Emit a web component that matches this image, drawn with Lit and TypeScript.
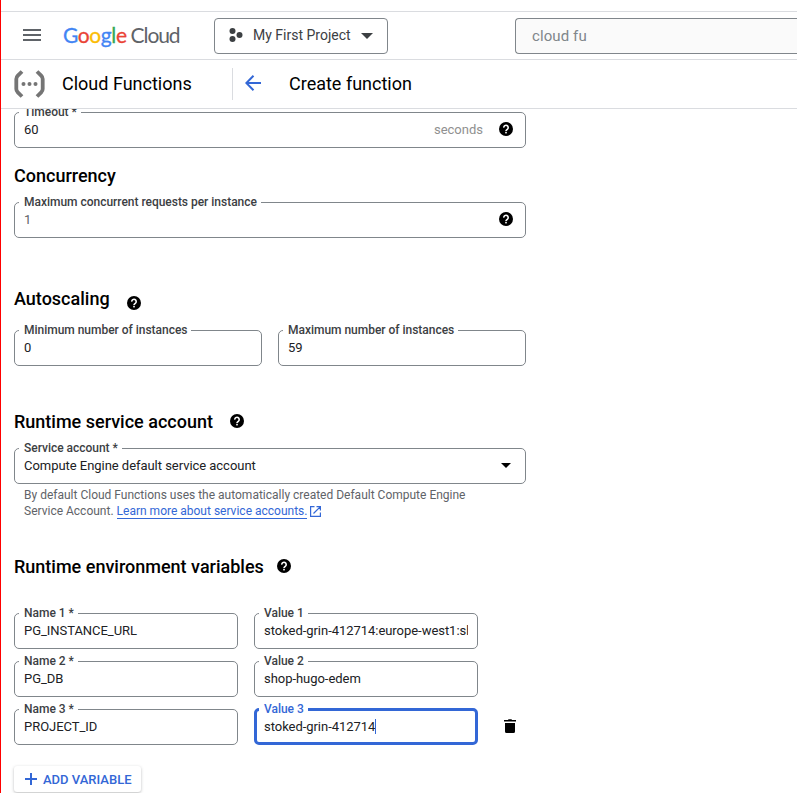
import { LitElement, html, css, nothing } from "lit";
import { customElement, property } from "lit/decorators.js";

const helpIcon = html`<svg class="help" width="18" height="18" viewBox="0 0 18 18">
  <circle cx="9" cy="9" r="7" fill="#000"></circle>
  <path d="M6.8 7.6a2.200 2.200 0 1 1 3.500 1.700c-.8.6-1.300.8-1.300 1.700" fill="none" stroke="#fff" stroke-width="1.600"></path>
  <rect x="8.200" y="11.800" width="1.600" height="1.600" fill="#fff"></rect>
</svg>`;

@customElement("outlined-field")
export class OutlinedField extends LitElement {
  @property() label = "";
  @property() value = "";
  @property() suffix = "";
  @property({ type: Boolean }) help = false;
  @property({ type: Boolean }) select = false;
  @property({ type: Boolean, reflect: true }) focused = false;
  @property({ type: Boolean, reflect: true }) muted = false;

  static styles = css`
    :host { display: block; position: relative; height: 36px; box-sizing: border-box; min-width: 0; }
    fieldset {
      position: absolute; left: 0; right: 0; top: -8px; bottom: 0; margin: 0;
      padding: 0 0 0 4px; border: 1px solid #80868b; border-radius: 5px; min-width: 0;
    }
    legend { height: 17px; padding: 0 4px 0 5px; white-space: nowrap; font: 500 12px/17px Roboto, sans-serif; letter-spacing: -0.02px; color: #3c4043; }
    .row { position: relative; display: flex; align-items: center; height: 36px; padding: 0 10px; box-sizing: border-box; }
    .value { flex: 1; min-width: 0; overflow: hidden; white-space: nowrap; font: 400 13px/20px Roboto, sans-serif; letter-spacing: -0.04px; color: #202124; }
    :host([muted]) .value { color: #5f6368; }
    .suffix { font: 400 13px/20px Roboto, sans-serif; color: #909090; margin-right: 14px; }
    .help { display: block; margin: -2px 1px 0 0; }
    .arrow { display: block; margin-right: 5px; margin-top: -1px; }
    :host([focused]) fieldset { border: 3px solid #3367d6; padding-left: 2px; }
    :host([focused]) legend { color: #3367d6; }
    .caret { display: inline-block; width: 1px; height: 15px; background: #3367d6; vertical-align: -3px; }
  `;

  render() {
    return html`<fieldset><legend>${this.label}</legend></fieldset>
      <div class="row">
        <span class="value">${this.value}${this.focused ? html`<i class="caret"></i>` : nothing}</span>
        ${this.suffix ? html`<span class="suffix">${this.suffix}</span>` : nothing}
        ${this.help ? helpIcon : nothing}
        ${this.select ? html`<svg class="arrow" width="10" height="5" viewBox="0 0 10 5"><path d="M0 0h10L5 5z"></path></svg>` : nothing}
      </div>`;
  }
}

const variables = [
  ["PG_INSTANCE_URL", "stoked-grin-412714:europe-west1:shop"],
  ["PG_DB", "shop-hugo-edem"],
  ["PROJECT_ID", "stoked-grin-412714"],
];

@customElement("app-root")
export class AppRoot extends LitElement {
  static styles = css`
    :host { display: flex; flex-direction: column; height: 793px; box-sizing: border-box; overflow: hidden; border-left: 1px solid #f00; background: #fff; font-family: Roboto, sans-serif; color: #000; }
    svg { display: block; flex: none; }
    .strip { height: 11px; flex: none; border-bottom: 1px solid #dadce0; }
    .topbar { display: flex; align-items: center; height: 47px; flex: none; border-bottom: 1px solid #dadce0; padding-left: 22px; }
    .menu { margin-bottom: 1px; }
    .logo { display: flex; gap: 4px; font: 400 21px/26px Lato, sans-serif; color: #5f6368; margin-left: 22px; margin-bottom: 1px; width: 117px; white-space: nowrap; }
    .b { color: #4285f4; } .r { color: #ea4335; } .y { color: #fbbc04; } .g { color: #34a853; }
    .word { letter-spacing: -0.4px; -webkit-text-stroke: 0.3px; }
    .cloud { letter-spacing: -1.1px; }
    .project { display: flex; align-items: center; box-sizing: border-box; width: 174px; height: 36px; margin-left: 34px; padding: 0 0 1px 14px; border: 1px solid #80868b; border-radius: 4px; font-size: 14px; color: #3c4043; }
    .project span { margin-left: 10px; width: 108px; white-space: nowrap; }
    .project .drop { margin-top: 2px; }
    .search { display: flex; align-items: center; box-sizing: border-box; flex: 1; height: 36px; margin-left: 127px; padding-left: 16px; border: 1px solid #80868b; border-right: 0; border-radius: 4px 0 0 4px; background: #fafafa; color: #80868b; font-size: 15px; letter-spacing: 0.1px; }
    .titlebar { display: flex; align-items: center; height: 48px; flex: none; border-bottom: 1px solid #dadce0; padding-left: 13px; font-size: 18px; white-space: nowrap; }
    .product { margin: 0 0 2px 17px; width: 170px; }
    .divider { width: 1px; height: 32px; background: #dadce0; margin-right: 12px; }
    .back { margin-bottom: 2px; }
    .page { margin: 0 0 2px 28px; }
    .content { flex: 1; min-height: 0; overflow: hidden; padding: 3px 0 0 13px; width: 512px; display: flex; flex-direction: column; }
    .content > * { flex: none; }
    h2 { display: flex; align-items: center; height: 24px; margin: 0; font: 500 18px/24px Roboto, sans-serif; white-space: nowrap; }
    .concurrency { margin: 16px 0 14px; }
    .autoscaling { margin: 49px 0 19px; }
    .autoscaling svg { margin: 8px 0 0 15px; }
    .account { margin: 44px 0 14px; }
    .account svg { margin: 0 0 2px 15px; }
    .environment { margin: 36px 0 34px; }
    .environment svg { margin: 0 0 2px 11px; }
    .pair { display: grid; grid-template-columns: 1fr 1fr; gap: 16px; }
    .hint { margin: 3px 10px 0; font-size: 12px; line-height: 16px; color: #5f6368; white-space: nowrap; }
    .hint div { display: flex; height: 16px; }
    .hint a { color: #3367d6; border-bottom: 1px solid #3367d6; height: 15px; margin: 0 3px; }
    .hint svg { margin-top: 3px; }
    .variables { display: grid; grid-template-columns: 224px 224px 18px; column-gap: 16px; row-gap: 12px; align-items: center; }
    .trash { margin-left: 7px; }
    .add { display: flex; align-items: center; box-sizing: border-box; width: 127px; height: 26px; margin-top: 21px; padding-left: 11px; border-radius: 3px; box-shadow: 0 1px 3px rgba(60, 64, 67, 0.35); color: #3367d6; font-size: 13px; font-weight: 500; white-space: nowrap; }
    .add svg { margin-right: 6px; }
  `;

  render() {
    return html`
      <div class="strip"></div>
      <header class="topbar">
        <svg class="menu" width="18" height="12" viewBox="0 0 18 12"><path d="M0 0h18v2H0zM0 5h18v2H0zM0 10h18v2H0z" fill="#5f6368"></path></svg>
        <div class="logo"><span class="word"><span class="b">G</span><span class="r">o</span><span class="y">o</span><span class="b">g</span><span class="g">l</span><span class="r">e</span></span><span class="cloud">Cloud</span></div>
        <div class="project">
          <svg width="14" height="14" viewBox="0 0 14 14" fill="#3c4043"><circle cx="3.500" cy="3" r="3"></circle><circle cx="10.500" cy="7" r="3"></circle><circle cx="3.500" cy="11" r="3"></circle></svg>
          <span>My First Project</span>
          <svg class="drop" width="12" height="6" viewBox="0 0 12 6"><path d="M0 0h12L6 6z" fill="#3c4043"></path></svg>
        </div>
        <div class="search">cloud fu</div>
      </header>
      <div class="titlebar">
        <svg width="31" height="28" viewBox="0 0 31 28">
          <path d="M8 1.500 3.800 5.700Q2.300 7.200 2.300 9v10q0 1.800 1.500 3.300L8 26.500M23 1.500l4.200 4.200q1.500 1.500 1.500 3.300v10q0 1.800-1.500 3.300L23 26.500" fill="none" stroke="#757575" stroke-width="3.800"></path>
          <g fill="#757575"><circle cx="9.500" cy="14" r="2"></circle><circle cx="15.500" cy="14" r="2"></circle><circle cx="21.500" cy="14" r="2"></circle></g>
        </svg>
        <span class="product">Cloud Functions</span>
        <span class="divider"></span>
        <svg class="back" width="16" height="16" viewBox="0 0 16 16"><path d="M16 8H1.500M8.500.8 1.300 8l7.200 7.200" fill="none" stroke="#3367d6" stroke-width="2"></path></svg>
        <span class="page">Create function</span>
      </div>
      <main class="content">
        <outlined-field label="Timeout *" value="60" suffix="seconds" help></outlined-field>
        <h2 class="concurrency">Concurrency</h2>
        <outlined-field label="Maximum concurrent requests per instance" value="1" help muted></outlined-field>
        <h2 class="autoscaling">Autoscaling ${helpIcon}</h2>
        <div class="pair">
          <outlined-field label="Minimum number of instances" value="0"></outlined-field>
          <outlined-field label="Maximum number of instances" value="59"></outlined-field>
        </div>
        <h2 class="account">Runtime service account ${helpIcon}</h2>
        <outlined-field label="Service account *" value="Compute Engine default service account" select></outlined-field>
        <div class="hint">
          <div>By default Cloud Functions uses the automatically created Default Compute Engine</div>
          <div>Service Account. <a>Learn more about service accounts.</a>
            <svg width="11" height="11" viewBox="0 0 11 11"><path d="M4.500.6H.6v9.800h9.800V6.500M6.500.6h3.900v3.900M10.200.8 3.500 7.500" fill="none" stroke="#3367d6" stroke-width="1.200"></path></svg>
          </div>
        </div>
        <h2 class="environment">Runtime environment variables ${helpIcon}</h2>
        <div class="variables">
          ${variables.map(([name, value], i) => html`
            <outlined-field label="Name ${i + 1} *" value=${name}></outlined-field>
            <outlined-field label="Value ${i + 1}" value=${value} ?focused=${i === 2}></outlined-field>
            ${i === 2 ? html`<svg class="trash" width="18" height="18" viewBox="0 0 18 18"><path d="M3 3.500V2h4l.5-.7h3l.5.700h4v1.500zM4 5h10v8.500a1.500 1.500 0 0 1-1.500 1.500h-7A1.500 1.500 0 0 1 4 13.500z"></path></svg>` : html`<span></span>`}`)}
        </div>
        <div class="add">
          <svg width="12" height="12" viewBox="0 0 12 12"><path d="M5 0h2v5h5v2H7v5H5V7H0V5h5z" fill="#3367d6"></path></svg>
          ADD VARIABLE
        </div>
      </main>`;
  }
}
